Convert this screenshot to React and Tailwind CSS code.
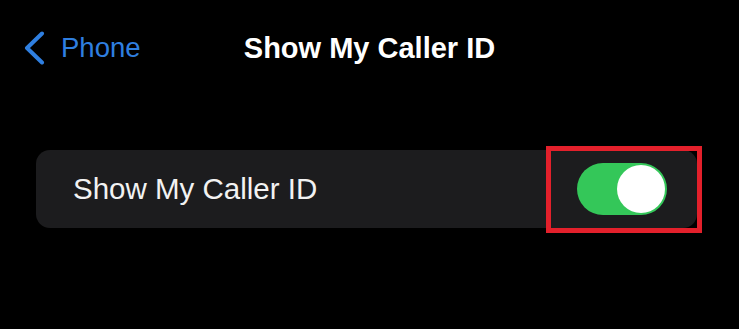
import React from 'react';

function Chevron() {
  return (
    <svg width="22" height="34" viewBox="0 0 22 34" fill="none">
      <polyline
        points="19,2.5 4,17 19,31.5"
        stroke="#2f7fe0"
        strokeWidth="4"
        strokeLinecap="round"
        strokeLinejoin="round"
      />
    </svg>
  );
}

function Toggle() {
  return (
    <div className="relative w-[90px] h-[52px]">
      <div className="w-full h-full rounded-full bg-[#34c759] flex items-center justify-end pr-[2px]">
        <div className="w-[48px] h-[48px] rounded-full bg-white" />
      </div>
      {/* highlight annotation */}
      <div className="absolute -left-[31px] -right-[35px] -top-[17px] -bottom-[18px] border-[5px] border-[#e3202b]" />
    </div>
  );
}

export default function App() {
  return (
    <div
      className="w-[739px] h-[329px] bg-black overflow-hidden"
      style={{ fontFamily: '"Liberation Sans", Arial, sans-serif' }}
    >
      {/* Nav bar */}
      <div className="grid grid-cols-[1fr_auto_1fr] items-center h-[96px]">
        <div className="flex items-center gap-[16px] pl-[23px] text-[#2f7fe0]">
          <Chevron />
          <span className="text-[27.5px] leading-none">Phone</span>
        </div>
        <h1 className="text-[29px] font-bold text-white leading-none">Show My Caller ID</h1>
        <div />
      </div>

      {/* Setting row */}
      <div className="mt-[54px] ml-[36px] w-[661px] h-[78px] rounded-[14px] bg-[#1c1c1e] flex items-center justify-between pl-[37px] pr-[30px]">
        <span className="text-[29.5px] text-[#f2f2f2] leading-none">Show My Caller ID</span>
        <Toggle />
      </div>
    </div>
  );
}
